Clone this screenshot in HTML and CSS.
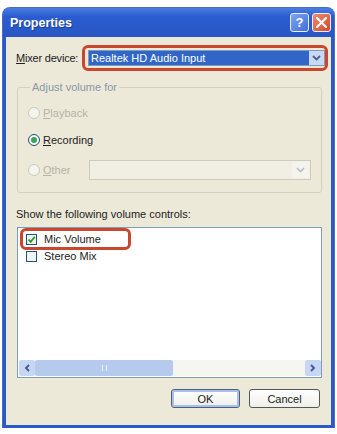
FILE: index.html
```html
<!DOCTYPE html>
<html lang="en">
<head>
    <meta charset="UTF-8">
    <meta name="viewport" content="width=device-width, initial-scale=1.0">
    <title>Properties</title>
    <link rel="stylesheet" href="styles.css">
</head>
<body>
    <div class="window">
        <div class="titlebar">
            <span class="title">Properties</span>
            <div class="title-buttons">
                <span class="tbtn help">?</span>
                <span class="tbtn close">
                    <svg width="11" height="11" viewBox="0 0 11 11"><path d="M1 1L10 10M10 1L1 10" stroke="#fff" stroke-width="2.2" stroke-linecap="round"/></svg>
                </span>
            </div>
        </div>

        <div class="content">
            <div class="mixer-row">
                <label class="mixer-label"><u>M</u>ixer device:</label>
                <div class="highlight combo-wrap">
                    <div class="combo">
                        <span class="combo-text">Realtek HD Audio Input</span>
                        <span class="combo-arrow">
                            <svg width="9" height="6" viewBox="0 0 9 6"><path d="M1 1L4.5 4.5L8 1" stroke="#4d6185" stroke-width="1.8" fill="none"/></svg>
                        </span>
                    </div>
                </div>
            </div>

            <fieldset class="group">
                <legend>Adjust volume for</legend>
                <div class="radio-row disabled">
                    <span class="radio"></span>
                    <span><u>P</u>layback</span>
                </div>
                <div class="radio-row">
                    <span class="radio checked"></span>
                    <span><u>R</u>ecording</span>
                </div>
                <div class="radio-row disabled other-row">
                    <span class="radio"></span>
                    <span class="other-label"><u>O</u>ther</span>
                    <div class="combo-disabled">
                        <span class="combo-arrow dis">
                            <svg width="9" height="6" viewBox="0 0 9 6"><path d="M1 1L4.5 4.5L8 1" stroke="#b8bcc4" stroke-width="1.6" fill="none"/></svg>
                        </span>
                    </div>
                </div>
            </fieldset>

            <div class="show-label">Show the following volume controls:</div>

            <div class="listbox">
                <div class="list-items">
                    <div class="highlight item-wrap">
                        <div class="item">
                            <span class="check on">
                                <svg width="9" height="9" viewBox="0 0 9 9"><path d="M1.5 4.5L3.7 6.8L7.8 1.8" stroke="#21a121" stroke-width="1.8" fill="none"/></svg>
                            </span>
                            <span>Mic Volume</span>
                        </div>
                    </div>
                    <div class="item plain">
                        <span class="check"></span>
                        <span>Stereo Mix</span>
                    </div>
                </div>
                <div class="hscroll">
                    <span class="sbtn">
                        <svg width="6" height="8" viewBox="0 0 6 8"><path d="M5 1L2 4L5 7" stroke="#3d5a98" stroke-width="1.8" fill="none"/></svg>
                    </span>
                    <span class="thumb"><span class="grip"></span></span>
                    <span class="track"></span>
                    <span class="sbtn">
                        <svg width="6" height="8" viewBox="0 0 6 8"><path d="M1 1L4 4L1 7" stroke="#3d5a98" stroke-width="1.8" fill="none"/></svg>
                    </span>
                </div>
            </div>

            <div class="buttons">
                <button class="btn default">OK</button>
                <button class="btn">Cancel</button>
            </div>
        </div>
    </div>
</body>
</html>
```

FILE: styles.css
```css
* {
    margin: 0;
    padding: 0;
    box-sizing: border-box;
}

body {
    font-family: 'Liberation Sans', Arial, sans-serif;
    font-size: 11px;
    color: #222;
    background: #fff;
    padding: 8px 3px 0 3px;
}

.window {
    width: 331px;
    height: 420px;
    display: flex;
    flex-direction: column;
    background: #2b5ac8;
    border-radius: 7px 7px 0 0;
    padding: 0 3px 3px 3px;
    box-shadow: 0 0 0 1px #4a6eb8;
}

.titlebar {
    height: 29px;
    display: flex;
    align-items: center;
    justify-content: space-between;
    background: linear-gradient(180deg, #4a7de4 0%, #2b5ccf 30%, #2856c4 100%);
    border-radius: 6px 6px 0 0;
    margin: 0 -3px;
    padding-left: 7px;
    padding-right: 3px;
}

.title {
    color: #fff;
    font-weight: bold;
    font-size: 12.5px;
    font-family: 'Liberation Sans', Arial, sans-serif;
    text-shadow: 1px 1px 0 #1d3f94;
}

.title-buttons {
    display: flex;
    gap: 3px;
    margin-top: -1px;
}

.tbtn {
    width: 19px;
    height: 19px;
    border: 1px solid #e8eefa;
    border-radius: 3px;
    display: flex;
    align-items: center;
    justify-content: center;
    color: #fff;
    font-weight: bold;
    font-size: 13px;
}

.help {
    background: linear-gradient(135deg, #7ea5ee, #3f6fdc);
}

.close {
    background: linear-gradient(135deg, #ee8a70, #d6492a);
}

.content {
    flex: 1;
    background: #ece9d8;
    padding: 8px 3px 0 10px;
    display: flex;
    flex-direction: column;
}

.mixer-row {
    display: flex;
    align-items: center;
    gap: 4px;
}

.mixer-label {
    width: 62px;
    white-space: nowrap;
    letter-spacing: -0.2px;
}

.highlight {
    border: 3px solid #c8472e;
    border-radius: 6px;
}

.combo-wrap {
    flex: 1;
    padding: 2px 0 2px 3px;
}

.combo {
    height: 16px;
    display: flex;
    align-items: center;
    background: #fff;
    border: 1px solid #7f9db9;
}

.combo-text {
    flex: 1;
    height: 100%;
    background: #3166c8;
    color: #fff;
    padding-left: 2px;
    line-height: 14px;
}

.combo-arrow {
    width: 15px;
    height: 100%;
    display: flex;
    align-items: center;
    justify-content: center;
    background: #c9d8f5;
}

.group {
    margin: 10px 6px 0 1px;
    height: 112px;
    border: 1px solid #d2d0c0;
    border-radius: 3px;
    padding: 6px 10px 0 10px;
}

.group legend {
    color: #8c96aa;
    padding: 0 2px;
    margin-left: 2px;
}

.radio-row {
    display: flex;
    align-items: center;
    gap: 3px;
    height: 27px;
}

.radio-row.disabled {
    color: #b5b3a8;
}

.radio {
    width: 12px;
    height: 12px;
    border-radius: 50%;
    border: 1px solid #1c5180;
    background: #f5f5f0;
    display: flex;
    align-items: center;
    justify-content: center;
}

.disabled .radio {
    border-color: #cac8bb;
}

.radio.checked::after {
    content: '';
    width: 6px;
    height: 6px;
    border-radius: 50%;
    background: #37a55b;
}

.other-row {
    margin-top: 4px;
    height: 26px;
}

.other-label {
    width: 43px;
}

.combo-disabled {
    flex: 1;
    height: 20px;
    border: 1px solid #cdcbbd;
    background: #f1efe3;
    display: flex;
    justify-content: flex-end;
    padding: 1px;
}

.combo-arrow.dis {
    background: #f4f3ee;
    width: 17px;
}

.show-label {
    margin-top: 15px;
}

.listbox {
    margin: 7px 6px 0 1px;
    height: 151px;
    background: #fff;
    border: 1px solid #7f9db9;
    display: flex;
    flex-direction: column;
}

.list-items {
    flex: 1;
    padding: 0 0 0 2px;
}

.item-wrap {
    width: 111px;
    padding: 1px 0 0 3px;
    height: 22px;
}

.item {
    display: flex;
    align-items: center;
    gap: 7px;
    height: 14px;
}

.item.plain {
    padding-left: 6px;
    margin-top: -1px;
}

.check {
    width: 11px;
    height: 11px;
    border: 1px solid #1c5180;
    background: #f4f4ef;
    display: flex;
    align-items: center;
    justify-content: center;
}

.hscroll {
    height: 16px;
    display: flex;
    margin: 0 0 1px 1px;
}

.sbtn {
    width: 16px;
    display: flex;
    align-items: center;
    justify-content: center;
    background: #c7d6f2;
    border-radius: 2px;
}

.thumb {
    width: 138px;
    background: #b6caee;
    border-radius: 2px;
    display: flex;
    align-items: center;
    justify-content: center;
}

.grip {
    width: 5px;
    height: 6px;
    border-left: 1px solid #e6eefc;
    border-right: 1px solid #e6eefc;
}

.track {
    flex: 1;
    background: #f6f6f1;
}

.buttons {
    display: flex;
    justify-content: flex-end;
    gap: 9px;
    margin: 11px 8px 0 0;
}

.btn {
    font-family: 'Liberation Sans', Arial, sans-serif;
    font-size: 11px;
    color: #222;
    width: 71px;
    height: 19px;
    border: 1px solid #555;
    border-radius: 3px;
    background: linear-gradient(180deg, #fefefe, #f0f0ea);
}

.btn.default {
    width: 69px;
    border-color: #4e5f80;
    box-shadow: inset 0 0 0 2px #a9c0ea;
}
```
